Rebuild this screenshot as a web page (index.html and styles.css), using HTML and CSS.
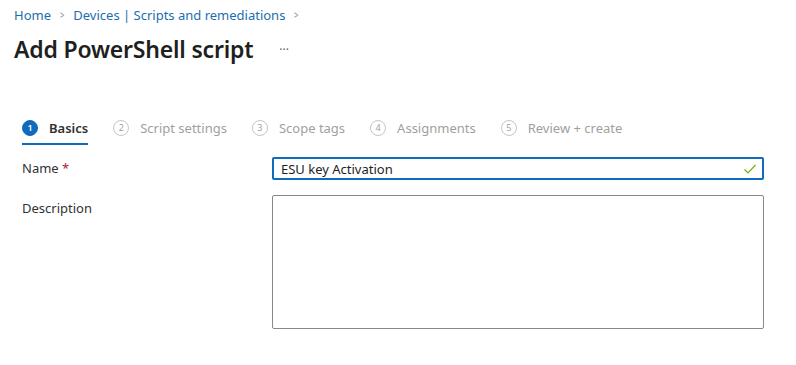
FILE: index.html
```html
<!DOCTYPE html>
<html lang="en">
<head>
<meta charset="utf-8">
<title>Add PowerShell script</title>
<link rel="stylesheet" href="styles.css">
</head>
<body>
<div class="page">
  <nav class="breadcrumb">
    <a class="crumb">Home</a>
    <span class="sep">&gt;</span>
    <a class="crumb">Devices | Scripts and remediations</a>
    <span class="sep">&gt;</span>
  </nav>
  <div class="title-row">
    <h1 class="title">Add PowerShell script</h1>
    <span class="more">···</span>
  </div>
  <div class="steps">
    <div class="step active"><span class="num">1</span><span class="label">Basics</span></div>
    <div class="step"><span class="num">2</span><span class="label">Script settings</span></div>
    <div class="step"><span class="num">3</span><span class="label">Scope tags</span></div>
    <div class="step"><span class="num">4</span><span class="label">Assignments</span></div>
    <div class="step"><span class="num">5</span><span class="label">Review + create</span></div>
  </div>
  <div class="form">
    <div class="row">
      <label class="field-label">Name <span class="req">*</span></label>
      <div class="input valid">
        <span class="value">ESU key Activation</span>
        <svg class="check" width="14" height="12" viewBox="0 0 14 12"><path d="M1.5 6.5 L5 10 L12.5 2" fill="none" stroke="#6bb700" stroke-width="1.2"/></svg>
      </div>
    </div>
    <div class="row">
      <label class="field-label desc">Description</label>
      <div class="textarea"></div>
    </div>
  </div>
</div>
</body>
</html>
```
FILE: styles.css
```css
html, body {
  margin: 0;
  padding: 0;
  background: #ffffff;
}
body {
  font-family: "Noto Sans", "Open Sans", sans-serif;
  color: #323130;
}
.page {
  padding: 6px 0 0 14px;
}
.breadcrumb {
  display: flex;
  align-items: center;
  height: 18px;
  font-size: 13px;
  line-height: 18px;
}
.crumb {
  color: #1b6ead;
}
.sep {
  color: #8a8886;
  font-size: 11px;
  margin: 0 8px;
  transform: scaleX(0.7);
}
.title-row {
  display: flex;
  align-items: center;
  height: 32px;
  margin-top: 9px;
}
.title {
  margin: 0;
  font-size: 23px;
  font-weight: 600;
  line-height: 32px;
  color: #201f1e;
  letter-spacing: -0.2px;
}
.more {
  margin-left: 26px;
  font-size: 12px;
  color: #605e5c;
}
.steps {
  display: flex;
  gap: 25px;
  margin-top: 47px;
  padding-left: 8px;
}
.step {
  display: flex;
  align-items: center;
  gap: 11px;
  padding: 6px 0 5px;
  border-bottom: 2px solid transparent;
  font-size: 13px;
  line-height: 20px;
  color: #a19f9d;
}
.step.active {
  border-bottom-color: #0f6cbd;
  color: #323130;
  font-weight: 600;
}
.num {
  width: 14px;
  height: 14px;
  border: 1px solid #c8c6c4;
  border-radius: 50%;
  font-size: 9px;
  line-height: 14px;
  text-align: center;
  font-weight: 400;
  color: #a19f9d;
}
.step.active .num {
  background: #0f6cbd;
  border-color: #0f6cbd;
  color: #ffffff;
  font-weight: 600;
}
.form {
  padding-left: 8px;
  margin-top: 12px;
}
.row {
  display: flex;
  margin-bottom: 15px;
}
.field-label {
  width: 250px;
  flex: none;
  font-size: 13px;
  line-height: 23px;
  color: #323130;
}
.field-label.desc {
  line-height: 26px;
}
.req {
  color: #a4262c;
}
.input {
  box-sizing: border-box;
  width: 492px;
  height: 23px;
  border: 2px solid #0f6cbd;
  border-radius: 2px;
  display: flex;
  align-items: center;
  justify-content: space-between;
  padding: 0 5px 0 7px;
  font-size: 13px;
}
.value {
  color: #201f1e;
}
.textarea {
  box-sizing: border-box;
  width: 492px;
  height: 134px;
  border: 1px solid #8a8886;
  border-radius: 2px;
}
```
